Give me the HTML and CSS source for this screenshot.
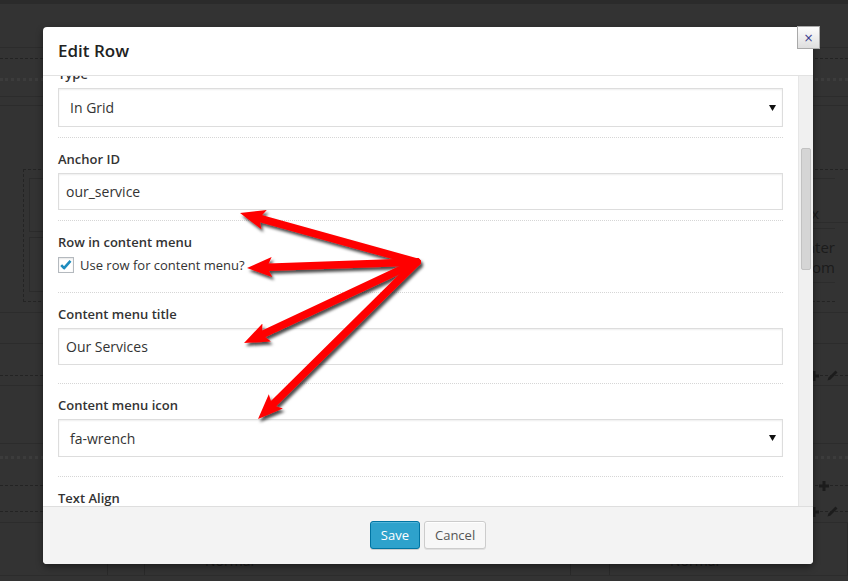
FILE: index.html
```html
<!DOCTYPE html>
<html>
<head>
<meta charset="utf-8">
<title>Edit Row</title>
<link rel="stylesheet" href="styles.css">
</head>
<body>
<div class="page">
  <div class="bg-strip"></div>
  <div class="bg-row r1"></div>
  <div class="bg-row r2"></div>
  <div class="bg-row r3"></div>
  <div class="bg-row r4"></div>
  <div class="bg-row r5"></div>
  <div class="bg-row r6"></div>
  <div class="bg-split">
    <div class="bg-left">
      <div class="dash-box">
        <div class="inner-box"></div>
        <div class="inner-box inner-box-2"></div>
      </div>
    </div>
    <div class="bg-right">
      <div class="rc-a"></div>
      <div class="rc-b">Box</div>
      <div class="rc-c"></div>
      <div class="rc-d">Center<br>Random</div>
      <div class="rc-e"></div>
    </div>
  </div>
  <div class="bg-row r8"></div>
  <div class="bg-row r9"></div>
  <div class="bg-row r10">
    <div class="bg-icons">
      <svg class="ico-plus" width="10" height="10" viewBox="0 0 10 10"><path d="M3.5 0h3v3.5H10v3H6.5V10h-3V6.5H0v-3h3.5z"/></svg>
      <svg class="ico-pencil" width="11" height="11" viewBox="0 0 11 11"><path d="M8.5 0.5l2 2-7 7-3 1 1-3z"/></svg>
    </div>
  </div>
  <div class="bg-row r11"></div>
  <div class="bg-row r12"></div>
  <div class="bg-row r13"></div>
  <div class="bg-row r14">
    <div class="bg-icons bg-icons-single">
      <svg class="ico-plus" width="10" height="10" viewBox="0 0 10 10"><path d="M3.5 0h3v3.5H10v3H6.5V10h-3V6.5H0v-3h3.5z"/></svg>
    </div>
  </div>
  <div class="bg-row r15">
    <div class="bg-icons">
      <svg class="ico-plus" width="10" height="10" viewBox="0 0 10 10"><path d="M3.5 0h3v3.5H10v3H6.5V10h-3V6.5H0v-3h3.5z"/></svg>
      <svg class="ico-pencil" width="11" height="11" viewBox="0 0 11 11"><path d="M8.5 0.5l2 2-7 7-3 1 1-3z"/></svg>
    </div>
  </div>
  <div class="bg-row r16"></div>
  <div class="bg-table">
    <div class="bg-cell"></div>
    <div class="bg-cell"></div>
    <div class="bg-cell bg-cell-text">Normal</div>
    <div class="bg-cell"></div>
    <div class="bg-cell bg-cell-text">Normal</div>
  </div>
</div>

<div class="modal">
  <div class="modal-head">
    <h1 class="modal-title">Edit Row</h1>
  </div>
  <button class="modal-close">×</button>
  <div class="modal-body">
    <div class="modal-scroll">
      <div class="field field-first">
        <label class="field-label">Type</label>
        <div class="control select select-tall">
          <span>In Grid</span>
          <svg class="caret" width="7" height="6" viewBox="0 0 7 6"><polygon points="0,0 7,0 3.5,6"/></svg>
        </div>
      </div>
      <div class="field field-tight">
        <label class="field-label">Anchor ID</label>
        <div class="control input">our_service</div>
      </div>
      <div class="field field-check">
        <label class="field-label">Row in content menu</label>
        <div class="check-row">
          <span class="checkbox">
            <svg width="14" height="14" viewBox="0 0 14 14"><path d="M2.2 7.2l2.9 3 6.4-7.4" fill="none" stroke="#1e8cbe" stroke-width="2.6" stroke-linejoin="round"/></svg>
          </span>
          <span class="check-text">Use row for content menu?</span>
        </div>
      </div>
      <div class="field field-loose">
        <label class="field-label">Content menu title</label>
        <div class="control input">Our Services</div>
      </div>
      <div class="field field-loose2">
        <label class="field-label">Content menu icon</label>
        <div class="control select">
          <span>fa-wrench</span>
          <svg class="caret" width="7" height="6" viewBox="0 0 7 6"><polygon points="0,0 7,0 3.5,6"/></svg>
        </div>
      </div>
      <div class="field">
        <label class="field-label">Text Align</label>
        <div class="control select">
          <span>Left</span>
          <svg class="caret" width="7" height="6" viewBox="0 0 7 6"><polygon points="0,0 7,0 3.5,6"/></svg>
        </div>
      </div>
    </div>
    <div class="scrollbar"><div class="thumb"></div></div>
  </div>
  <div class="modal-foot">
    <button class="btn btn-primary">Save</button>
    <button class="btn">Cancel</button>
  </div>
</div>

<svg class="arrows" width="848" height="581" viewBox="0 0 848 581">
  <defs>
    <marker id="head" markerUnits="userSpaceOnUse" markerWidth="26" markerHeight="22" viewBox="0 0 26 22" refX="11" refY="11" orient="auto">
      <path d="M0 1 L25 11 L0 21 L5 11 Z" fill="#ff0000"/>
    </marker>
    <filter id="shadow" x="-10%" y="-10%" width="130%" height="130%">
      <feDropShadow dx="2" dy="3" stdDeviation="1.6" flood-color="#000" flood-opacity="0.7"/>
    </filter>
  </defs>
  <g filter="url(#shadow)" stroke="#ff0000" stroke-width="7.5" stroke-linecap="round" fill="none">
    <line x1="417" y1="262" x2="253.5" y2="216.7" marker-end="url(#head)"/>
    <line x1="417" y1="262" x2="261" y2="267.5" marker-end="url(#head)"/>
    <line x1="417" y1="262" x2="256.7" y2="337.1" marker-end="url(#head)"/>
    <line x1="417" y1="262" x2="268" y2="409.2" marker-end="url(#head)"/>
  </g>
</svg>
</body>
</html>
```

FILE: styles.css
```css
* {
  box-sizing: border-box;
}

html, body {
  margin: 0;
  padding: 0;
}

body {
  width: 848px;
  height: 581px;
  overflow: hidden;
  position: relative;
  background: #333333;
  font-family: "Open Sans", "DejaVu Sans", sans-serif;
}

/* ---------- background page (behind overlay) ---------- */
.page {
  display: flex;
  flex-direction: column;
  width: 848px;
}

.bg-strip {
  height: 4px;
  background: #2b2b2b;
}

.bg-row {
  border-bottom: 1px solid #2c2c2c;
}

.r1 { height: 44px; }
.r2 { height: 11px; border-bottom: 1px dashed #232323; }
.r3 { height: 22px; border-bottom: 3px dotted #3c3c3c; }
.r4 { height: 16px; }
.r5 { height: 9px; }
.r6 { height: 63px; border-bottom: none; }
.r8 { height: 11px; }
.r9 { height: 31px; }
.r10 { height: 32px; border-bottom: 1px dashed #232323; }
.r11 { height: 10px; }
.r12 { height: 58px; }
.r13 { height: 15px; border-bottom: 3px dotted #3c3c3c; }
.r14 { height: 27px; border-bottom: 1px dashed #232323; }
.r15 { height: 26px; border-bottom: 1px dashed #232323; }
.r16 { height: 11px; }

.r10, .r14, .r15 {
  display: flex;
  justify-content: flex-end;
  align-items: flex-end;
}

.bg-icons {
  display: flex;
  align-items: center;
  gap: 8px;
  padding-right: 10px;
  margin-bottom: -6px;
}

.bg-icons-single {
  padding-right: 19px;
}

.bg-icons svg {
  fill: #1c1c1c;
  display: block;
}

.bg-split {
  height: 133px;
  display: grid;
  grid-template-columns: 1fr 148px;
}

.bg-left {
  padding-left: 23px;
}

.dash-box {
  width: 400px;
  height: 133px;
  border: 1px dashed #242424;
  padding: 8px 0 0 5px;
}

.inner-box {
  height: 54px;
  border: 1px solid #2b2b2b;
  margin-bottom: 5px;
}

.inner-box-2 {
  height: 55px;
}

.bg-right {
  border-top: 1px dashed #232323;
  color: #1b1b1b;
  font-size: 15px;
  text-align: right;
  padding-right: 13px;
  overflow: hidden;
}

.rc-a { height: 9px; border-bottom: 1px solid #2c2c2c; }
.rc-b {
  height: 44px;
  border-bottom: 1px solid #2c2c2c;
  line-height: 16px;
  padding-top: 26px;
  padding-right: 29px;
  margin-right: -13px;
  overflow: hidden;
}
.rc-c { height: 6px; border-bottom: 1px solid #2c2c2c; }
.rc-d {
  height: 54px;
  border-bottom: 1px solid #2c2c2c;
  line-height: 20px;
  padding-top: 8px;
}
.rc-e { height: 19px; border-bottom: 1px dashed #232323; }

.bg-table {
  height: 53px;
  display: grid;
  grid-template-columns: 108px 37px 426px 39px 1fr;
  border-bottom: 1px solid #2c2c2c;
}

.bg-cell {
  border-right: 1px solid #2a2a2a;
}

.bg-cell-text {
  color: #1b1b1b;
  font-size: 14px;
  line-height: 20px;
  padding-top: 28px;
  padding-left: 60px;
}

/* ---------- modal ---------- */
.modal {
  position: absolute;
  left: 43px;
  top: 27px;
  width: 770px;
  height: 537px;
  background: #ffffff;
  border-radius: 4px;
  box-shadow: 0 3px 7px rgba(0, 0, 0, 0.45);
  display: flex;
  flex-direction: column;
}

.modal-head {
  height: 49px;
  flex: none;
  border-bottom: 1px solid #e2e2e2;
  padding: 0 15px;
  display: flex;
  align-items: center;
}

.modal-title {
  margin: 0;
  font-size: 17px;
  font-weight: 600;
  color: #222222;
  line-height: 22px;
}

.modal-close {
  position: absolute;
  top: -1px;
  right: -7px;
  width: 23px;
  height: 23px;
  padding: 0;
  border: 1px solid #a9a9a9;
  background: linear-gradient(#fdfdfd, #dedede);
  color: #3a3f8f;
  font-family: "DejaVu Sans", sans-serif;
  font-size: 12px;
  line-height: 20px;
  text-align: center;
}

.modal-body {
  height: 430px;
  flex: none;
  display: flex;
  overflow: hidden;
}

.modal-scroll {
  flex: 1;
  padding: 0 15px;
  overflow: hidden;
}

.scrollbar {
  width: 15px;
  flex: none;
  background: #f0f0f0;
  border-left: 1px solid #e6e6e6;
  padding: 72px 2px 0 2px;
}

.thumb {
  height: 122px;
  background: #d5d5d5;
  border: 1px solid #c2c2c2;
  border-radius: 2px;
}

.field {
  padding-top: 12px;
  border-bottom: 1px dotted #d6d6d6;
}

.field-first {
  margin-top: -23px;
}

.field-label {
  display: block;
  font-size: 13px;
  font-weight: 600;
  color: #333333;
  line-height: 18px;
  margin-bottom: 5px;
}

.control {
  height: 37px;
  border: 1px solid #dddddd;
  box-shadow: inset 0 1px 2px rgba(0, 0, 0, 0.07);
  background: #ffffff;
  font-size: 14px;
  color: #333333;
  display: flex;
  align-items: center;
  margin-bottom: 18px;
}

.input {
  padding-left: 7px;
}

.select {
  height: 38px;
  padding: 0 6px 0 11px;
  justify-content: space-between;
  margin-bottom: 19px;
}

.select-tall {
  height: 39px;
  margin-bottom: 10px;
}

.caret {
  fill: #111111;
  display: block;
}

.field-tight .control {
  margin-bottom: 10px;
}

.check-row {
  display: flex;
  align-items: center;
  height: 18px;
  margin-bottom: 18px;
  gap: 6px;
}

.checkbox {
  width: 16px;
  height: 16px;
  border: 1px solid #b4b9be;
  background: #ffffff;
  box-shadow: inset 0 1px 2px rgba(0, 0, 0, 0.1);
  display: flex;
  align-items: center;
  justify-content: center;
}

.checkbox svg {
  display: block;
}

.check-text {
  font-size: 13px;
  color: #333333;
  line-height: 18px;
}

.modal-foot {
  flex: 1;
  background: #f3f3f3;
  border-top: 1px solid #dedede;
  border-radius: 0 0 4px 4px;
  display: flex;
  justify-content: center;
  align-items: center;
  gap: 4px;
  padding-bottom: 1px;
}

.btn {
  height: 28px;
  padding: 0 10px;
  font-family: "Open Sans", "DejaVu Sans", sans-serif;
  font-size: 13px;
  line-height: 26px;
  border-radius: 3px;
  border: 1px solid #cccccc;
  background: #f7f7f7;
  color: #555555;
  box-shadow: inset 0 1px 0 #ffffff, 0 1px 0 rgba(0, 0, 0, 0.08);
}

.btn-primary {
  background: #2ea2cc;
  border-color: #0074a2;
  color: #ffffff;
  box-shadow: inset 0 1px 0 rgba(120, 200, 230, 0.5), 0 1px 0 rgba(0, 0, 0, 0.15);
}

/* ---------- annotation arrows ---------- */
.arrows {
  position: absolute;
  left: 0;
  top: 0;
  pointer-events: none;
}
```
